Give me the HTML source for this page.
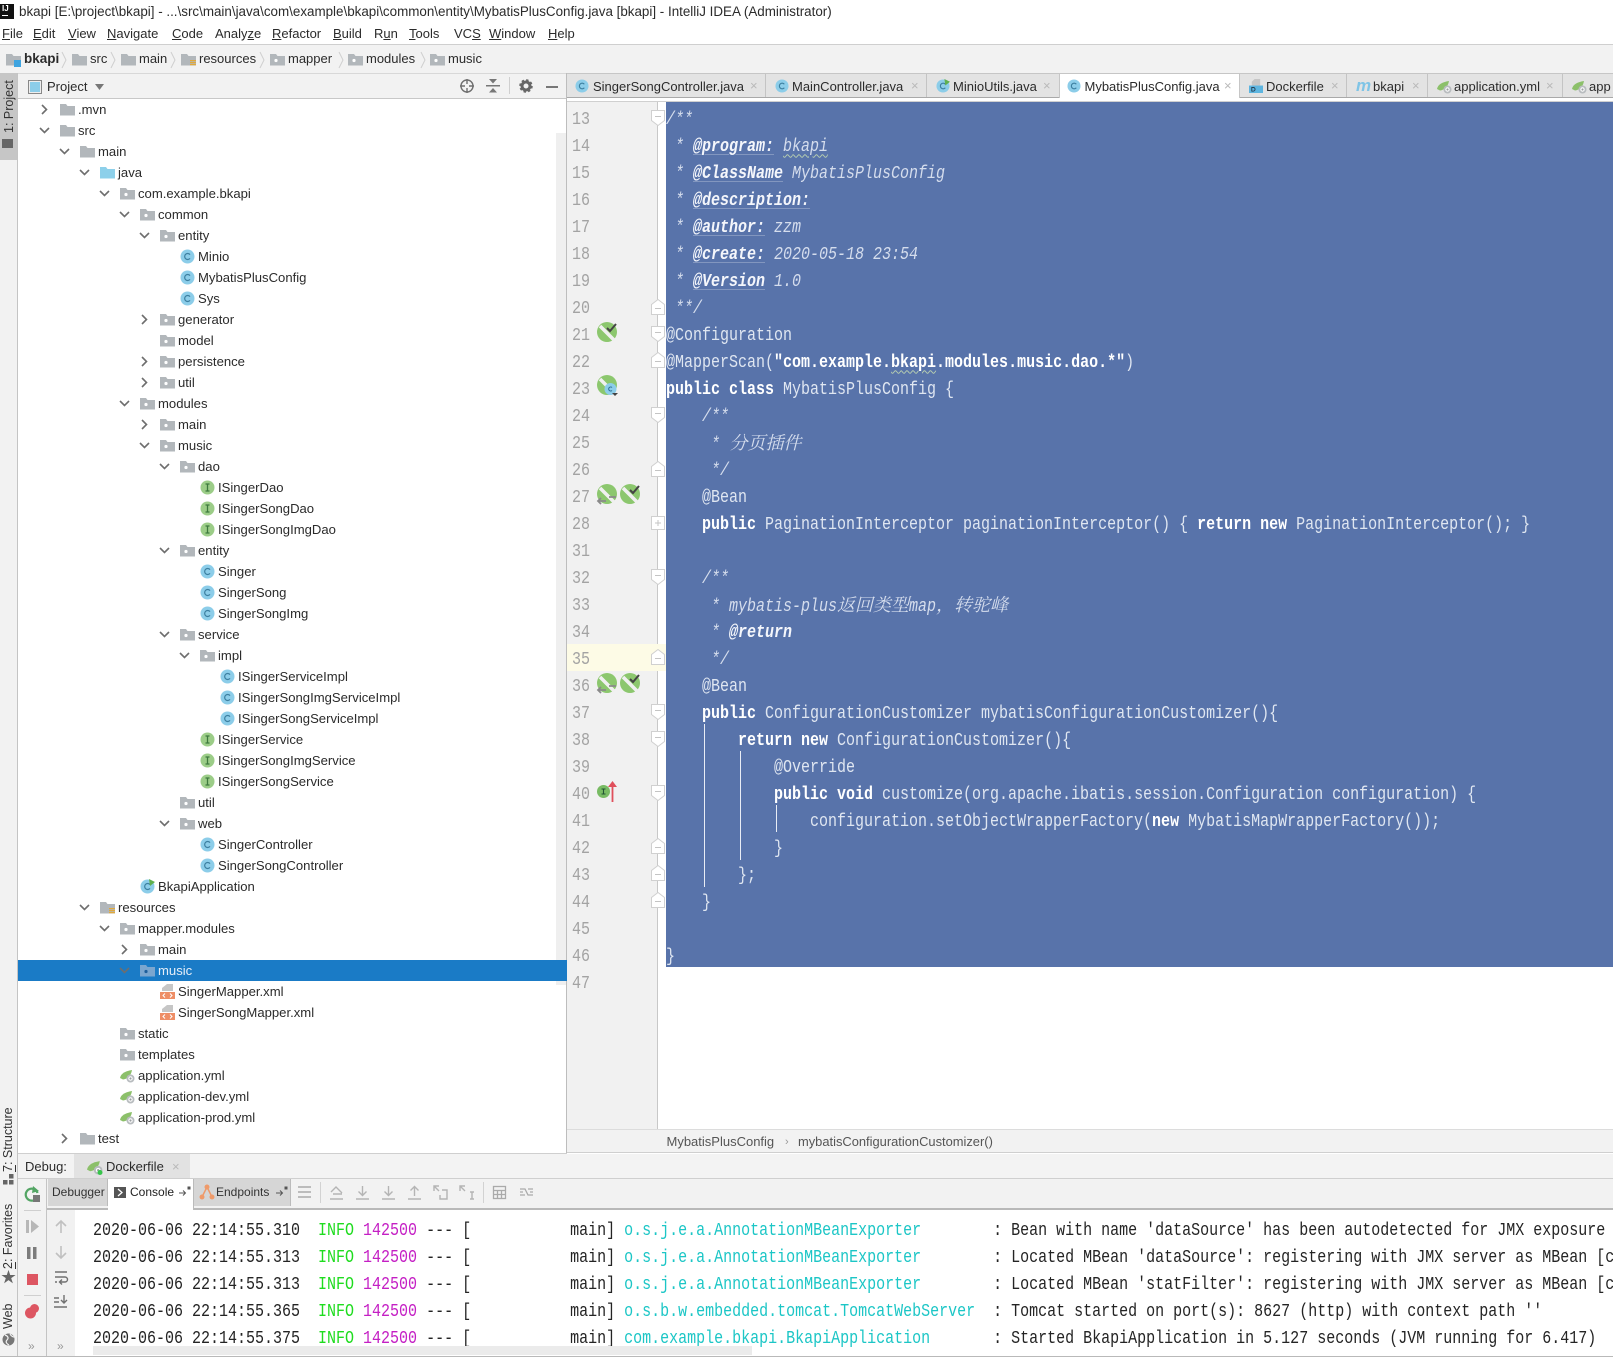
<!DOCTYPE html>
<html lang="en"><head><meta charset="utf-8"><title>bkapi - IntelliJ IDEA</title>
<style>
html{margin:0;padding:0;background:#fff;overflow:hidden;width:1613px;height:1357px}
body{margin:0;padding:0;background:#fff;position:relative;width:1613px;height:1357px;overflow:hidden;font-family:"Liberation Sans","Noto Sans CJK SC",sans-serif;font-size:13px;color:#2b2b2b}
.a{position:absolute}
.t{position:absolute;white-space:pre;line-height:18px}
.bar{position:absolute}
svg{position:absolute;overflow:visible}
/* tree */
#tree{position:absolute;left:18px;top:99px;width:549px}
.r{position:relative;height:21px;line-height:21px;font-size:13.1px;white-space:pre;color:#2b2b2b;padding-left:var(--l)}
.d0{--l:60px}.d1{--l:80px}.d2{--l:100px}.d3{--l:120px}.d4{--l:140px}.d5{--l:160px}.d6{--l:180px}.d7{--l:200px}.d8{--l:220px}
.r svg.i{left:calc(var(--l) - 18px);top:3px;width:15px;height:15px}
.r svg.c{left:calc(var(--l) - 39px);top:5px;width:11px;height:11px}
.sel{background:#1a7bc6;color:#e6eef8}
/* code */
.mono{font-family:"Liberation Mono","Noto Serif CJK SC",monospace;font-size:18px}
#code,#nums,#cons{position:absolute;transform:scaleX(.8333);transform-origin:0 0}
.l{height:27px;line-height:27px;white-space:pre}
.up{position:relative;top:-2px}
#code{left:666px;top:106.5px;width:1300px;color:#dfe6f1}
#nums{left:572px;top:106.5px;color:#a3a3a3}
#cons{left:93px;top:1217.5px;color:#242424;width:1900px}
.k{font-weight:bold;color:#fff}
.cm{font-style:italic;color:#d5dded}
.tg{font-style:italic;font-weight:bold;color:#f4f6fb;text-decoration:underline;text-decoration-color:rgba(255,255,255,.25);text-decoration-thickness:1px;text-underline-offset:3px}
.w{text-decoration:underline wavy #b9d0b0 1px;text-underline-offset:3px}
.st{font-weight:bold;color:#fff}
.cj{display:inline-block;transform:scaleX(1.2);transform-origin:0 50%;font-family:"Noto Serif CJK SC",serif;font-style:italic;font-weight:400;color:#d5dded}
.g{color:#1fdc1f}.m{color:#c41fc4}.b{color:#1cc6c6}
.v{position:absolute;writing-mode:vertical-rl;transform:rotate(180deg);white-space:pre;font-size:12.5px;color:#333;line-height:14px}
.x{position:absolute;color:#b9b9b9;font-size:13px;line-height:18px}
.n{position:absolute;color:#b5b5b5;font-size:16px;line-height:16px}
</style></head>
<body>
<svg width="0" height="0" style="position:absolute">
<defs>
<symbol id="f" viewBox="0 0 15 15"><path d="M0 2h6l1.5 2H15v9.5H0z" fill="#b2b7bb"/></symbol>
<symbol id="p" viewBox="0 0 15 15"><path d="M0 2h6l1.5 2H15v9.5H0z" fill="#b2b7bb"/><circle cx="6" cy="8.5" r="1.6" fill="#fff"/></symbol>
<symbol id="ps" viewBox="0 0 15 15"><path d="M0 2h6l1.5 2H15v9.5H0z" fill="#7ba6cf"/><circle cx="6" cy="8.5" r="1.6" fill="#1f5f9c"/></symbol>
<symbol id="fb" viewBox="0 0 15 15"><path d="M0 2h6l1.5 2H15v9.5H0z" fill="#8dd0ea"/></symbol>
<symbol id="fr" viewBox="0 0 15 15"><path d="M0 2h6l1.5 2H15v9.5H0z" fill="#b2b7bb"/><path d="M9 8h6v1.2H9zM9 10h6v1.2H9zM9 12h6v1.2H9z" fill="#e0a93c"/></symbol>
<symbol id="C" viewBox="0 0 15 15"><circle cx="7.5" cy="7.5" r="7" fill="#8ccde9"/><path d="M10 5.6A3 3 0 1 0 10 9.4" fill="none" stroke="#3c7fa0" stroke-width="1.2"/></symbol>
<symbol id="CR" viewBox="0 0 15 15"><circle cx="7.5" cy="7.5" r="7" fill="#8ccde9"/><path d="M10 5.6A3 3 0 1 0 10 9.4" fill="none" stroke="#3c7fa0" stroke-width="1.2"/><path d="M9 0l6 3-5 4z" fill="#5fb04f"/></symbol>
<symbol id="I" viewBox="0 0 15 15"><circle cx="7.5" cy="7.5" r="7" fill="#9ccd88"/><path d="M5.5 4h4M5.5 11h4M7.5 4v7" fill="none" stroke="#3e7a3e" stroke-width="1.3"/></symbol>
<symbol id="Y" viewBox="0 0 15 15"><path d="M0 10C1 5 6 3 12 2 11 8 7 11 3 11.5z" fill="#8cc06a"/><circle cx="10.5" cy="10.5" r="4" fill="#b8bcbf"/><circle cx="10.5" cy="10.5" r="2.2" fill="#fff"/><circle cx="10.5" cy="10.5" r="1.1" fill="#9a9ea2"/></symbol>
<symbol id="X" viewBox="0 0 15 15"><path d="M7 0h6v7H2V4z" fill="#c6c6c6"/><rect x="0" y="8" width="15" height="7" fill="#ee8e66"/><path d="M5 9.5L3 11.5l2 2M10 9.5l2 2-2 2" fill="none" stroke="#fff" stroke-width="1"/></symbol>
<symbol id="D" viewBox="0 0 15 15"><path d="M6 0h6v7H3V3z" fill="#c6c6c6"/><rect y="7" width="15" height="8" fill="#5db5e0"/><path d="M3 9h1.5a2 2 0 0 1 0 4H3z" fill="none" stroke="#234" stroke-width=".9"/></symbol>
<symbol id="ad" viewBox="0 0 11 11"><path d="M1 3l4.5 4.5L10 3" fill="none" stroke="#6e6e6e" stroke-width="1.6"/></symbol>
<symbol id="ar" viewBox="0 0 11 11"><path d="M3 1l4.5 4.5L3 10" fill="none" stroke="#6e6e6e" stroke-width="1.6"/></symbol>
<symbol id="fo" viewBox="0 0 14 16"><path d="M.5.5h13v10L7 15.5.5 10.500z" fill="#fff" stroke="#d0d0d0"/><path d="M4 6.500h6" stroke="#c4c4c4"/></symbol>
<symbol id="fu" viewBox="0 0 14 16"><path d="M.5 15.500h13v-10L7 .5.500 5.500z" fill="#fff" stroke="#d0d0d0"/><path d="M4 9.500h6" stroke="#c4c4c4"/></symbol>
<symbol id="fp" viewBox="0 0 14 14"><rect x=".5" y=".5" width="13" height="13" fill="#fff" stroke="#d0d0d0"/><path d="M4 7h6M7 4v6" stroke="#c4c4c4"/></symbol>
<symbol id="sp" viewBox="0 0 20 20"><circle cx="10" cy="10" r="10" fill="#8cc76e"/><path d="M3 4L17 18" stroke="#f0f0f0" stroke-width="3.500"/></symbol>
</defs></svg>

<!-- title & menu -->
<div class="a" style="left:0;top:4px;width:14px;height:15px;background:#111"></div>
<div class="a" style="left:2px;top:4px;font:bold 8px/9px 'Liberation Sans';color:#fff">IJ</div>
<div class="a" style="left:2px;top:15px;width:6px;height:1px;background:#fff"></div>
<div class="t" style="left:19px;top:3px;font-size:13.4px">bkapi [E:\project\bkapi] - ...\src\main\java\com\example\bkapi\common\entity\MybatisPlusConfig.java [bkapi] - IntelliJ IDEA (Administrator)</div>
<div class="t" style="left:2px;top:25px"><u>F</u>ile</div><div class="t" style="left:33px;top:25px"><u>E</u>dit</div><div class="t" style="left:68px;top:25px"><u>V</u>iew</div><div class="t" style="left:107px;top:25px"><u>N</u>avigate</div><div class="t" style="left:172px;top:25px"><u>C</u>ode</div><div class="t" style="left:215px;top:25px">Analy<u>z</u>e</div><div class="t" style="left:272px;top:25px"><u>R</u>efactor</div><div class="t" style="left:333px;top:25px"><u>B</u>uild</div><div class="t" style="left:374px;top:25px">R<u>u</u>n</div><div class="t" style="left:409px;top:25px"><u>T</u>ools</div><div class="t" style="left:454px;top:25px">VC<u>S</u></div><div class="t" style="left:489px;top:25px"><u>W</u>indow</div><div class="t" style="left:548px;top:25px"><u>H</u>elp</div>
<div class="bar" style="left:0;top:44px;width:1613px;height:29px;background:#f2f2f2;border-top:1px solid #cfcfcf;box-sizing:border-box"></div>
<!-- nav breadcrumb -->
<svg style="left:6px;top:52px" width="15" height="15"><use href="#f"/><rect x="8" y="8" width="7" height="7" fill="#3fa4e0"/></svg>
<div class="t" style="left:24px;top:50px;font-weight:bold;font-size:13.500px">bkapi</div>
<div class="t" style="left:90px;top:50px">src</div><div class="t" style="left:139px;top:50px">main</div><div class="t" style="left:199px;top:50px">resources</div><div class="t" style="left:288px;top:50px">mapper</div><div class="t" style="left:366px;top:50px">modules</div><div class="t" style="left:448px;top:50px">music</div>
<svg style="left:72px;top:52px" width="15" height="15"><use href="#f"/></svg><svg style="left:121px;top:52px" width="15" height="15"><use href="#f"/></svg><svg style="left:181px;top:52px" width="15" height="15"><use href="#fr"/></svg><svg style="left:270px;top:52px" width="15" height="15"><use href="#p"/></svg><svg style="left:348px;top:52px" width="15" height="15"><use href="#p"/></svg><svg style="left:430px;top:52px" width="15" height="15"><use href="#p"/></svg>
<svg style="left:0;top:50px" width="500" height="20" fill="none" stroke="#cfcfcf"><path d="M62 2l4 8-4 8M111 2l4 8-4 8M171 2l4 8-4 8M260 2l4 8-4 8M339 2l4 8-4 8M421 2l4 8-4 8"/></svg>

<!-- left strip -->
<div class="bar" style="left:0;top:73px;width:18px;height:1080px;background:#f2f2f2;border-right:1px solid #c4c4c4;box-sizing:border-box"></div>
<div class="bar" style="left:0;top:73px;width:17px;height:87px;background:#c6c6c6"></div>
<div class="v" style="left:2px;top:84px;height:49px">1: Project</div>
<div class="a" style="left:2px;top:139px;width:11px;height:9px;background:#666"></div>

<!-- project header -->
<div class="bar" style="left:18px;top:73px;width:549px;height:26px;background:#f2f2f2;border-bottom:1px solid #c8c8c8;border-top:1px solid #d8d8d8;box-sizing:border-box"></div>
<div class="a" style="left:28px;top:80px;width:12px;height:12px;border:1px solid #888;background:#8ccde9;box-shadow:inset 0 0 0 1px #eee"></div>
<div class="t" style="left:47px;top:78px;font-size:13px">Project</div>
<svg style="left:95px;top:84px" width="10" height="6"><path d="M0 0h9L4.500 6z" fill="#777"/></svg>
<svg style="left:459px;top:78px" width="16" height="16" fill="none" stroke="#6f6f6f" stroke-width="1.400"><circle cx="8" cy="8" r="6"/><path d="M8 1v5M8 10v5M1 8h5M10 8h5"/></svg>
<svg style="left:486px;top:79px" width="14" height="14" fill="#777"><path d="M0 6h14v1.500H0z"/><path d="M3 0h8L7 4.500zM3 13.500h8L7 9z"/></svg>
<div class="a" style="left:509px;top:77px;width:1px;height:17px;background:#cfcfcf"></div>
<svg style="left:520px;top:80px" width="12" height="12"><circle cx="6" cy="6" r="4" fill="none" stroke="#666" stroke-width="3"/><circle cx="6" cy="6" r="6" fill="none" stroke="#666" stroke-width="1.500" stroke-dasharray="2.500 2.200"/></svg>
<div class="a" style="left:546px;top:86px;width:12px;height:1.500px;background:#777"></div>

<!-- scroll track tree -->
<div class="bar" style="left:556px;top:133px;width:10px;height:852px;background:#efefef"></div>
<div class="bar" style="left:566px;top:73px;width:1px;height:1080px;background:#bdbdbd"></div>

<!-- tree -->
<div id="tree">
<div class="r d0"><svg class="c"><use href="#ar"/></svg><svg class="i"><use href="#f"/></svg>.mvn</div>
<div class="r d0"><svg class="c"><use href="#ad"/></svg><svg class="i"><use href="#f"/></svg>src</div>
<div class="r d1"><svg class="c"><use href="#ad"/></svg><svg class="i"><use href="#f"/></svg>main</div>
<div class="r d2"><svg class="c"><use href="#ad"/></svg><svg class="i"><use href="#fb"/></svg>java</div>
<div class="r d3"><svg class="c"><use href="#ad"/></svg><svg class="i"><use href="#p"/></svg>com.example.bkapi</div>
<div class="r d4"><svg class="c"><use href="#ad"/></svg><svg class="i"><use href="#p"/></svg>common</div>
<div class="r d5"><svg class="c"><use href="#ad"/></svg><svg class="i"><use href="#p"/></svg>entity</div>
<div class="r d6"><svg class="i"><use href="#C"/></svg>Minio</div>
<div class="r d6"><svg class="i"><use href="#C"/></svg>MybatisPlusConfig</div>
<div class="r d6"><svg class="i"><use href="#C"/></svg>Sys</div>
<div class="r d5"><svg class="c"><use href="#ar"/></svg><svg class="i"><use href="#p"/></svg>generator</div>
<div class="r d5"><svg class="i"><use href="#p"/></svg>model</div>
<div class="r d5"><svg class="c"><use href="#ar"/></svg><svg class="i"><use href="#p"/></svg>persistence</div>
<div class="r d5"><svg class="c"><use href="#ar"/></svg><svg class="i"><use href="#p"/></svg>util</div>
<div class="r d4"><svg class="c"><use href="#ad"/></svg><svg class="i"><use href="#p"/></svg>modules</div>
<div class="r d5"><svg class="c"><use href="#ar"/></svg><svg class="i"><use href="#p"/></svg>main</div>
<div class="r d5"><svg class="c"><use href="#ad"/></svg><svg class="i"><use href="#p"/></svg>music</div>
<div class="r d6"><svg class="c"><use href="#ad"/></svg><svg class="i"><use href="#p"/></svg>dao</div>
<div class="r d7"><svg class="i"><use href="#I"/></svg>ISingerDao</div>
<div class="r d7"><svg class="i"><use href="#I"/></svg>ISingerSongDao</div>
<div class="r d7"><svg class="i"><use href="#I"/></svg>ISingerSongImgDao</div>
<div class="r d6"><svg class="c"><use href="#ad"/></svg><svg class="i"><use href="#p"/></svg>entity</div>
<div class="r d7"><svg class="i"><use href="#C"/></svg>Singer</div>
<div class="r d7"><svg class="i"><use href="#C"/></svg>SingerSong</div>
<div class="r d7"><svg class="i"><use href="#C"/></svg>SingerSongImg</div>
<div class="r d6"><svg class="c"><use href="#ad"/></svg><svg class="i"><use href="#p"/></svg>service</div>
<div class="r d7"><svg class="c"><use href="#ad"/></svg><svg class="i"><use href="#p"/></svg>impl</div>
<div class="r d8"><svg class="i"><use href="#C"/></svg>ISingerServiceImpl</div>
<div class="r d8"><svg class="i"><use href="#C"/></svg>ISingerSongImgServiceImpl</div>
<div class="r d8"><svg class="i"><use href="#C"/></svg>ISingerSongServiceImpl</div>
<div class="r d7"><svg class="i"><use href="#I"/></svg>ISingerService</div>
<div class="r d7"><svg class="i"><use href="#I"/></svg>ISingerSongImgService</div>
<div class="r d7"><svg class="i"><use href="#I"/></svg>ISingerSongService</div>
<div class="r d6"><svg class="i"><use href="#p"/></svg>util</div>
<div class="r d6"><svg class="c"><use href="#ad"/></svg><svg class="i"><use href="#p"/></svg>web</div>
<div class="r d7"><svg class="i"><use href="#C"/></svg>SingerController</div>
<div class="r d7"><svg class="i"><use href="#C"/></svg>SingerSongController</div>
<div class="r d4"><svg class="i"><use href="#CR"/></svg>BkapiApplication</div>
<div class="r d2"><svg class="c"><use href="#ad"/></svg><svg class="i"><use href="#fr"/></svg>resources</div>
<div class="r d3"><svg class="c"><use href="#ad"/></svg><svg class="i"><use href="#p"/></svg>mapper.modules</div>
<div class="r d4"><svg class="c"><use href="#ar"/></svg><svg class="i"><use href="#p"/></svg>main</div>
<div class="r d4 sel"><svg class="c"><use href="#ad"/></svg><svg class="i"><use href="#ps"/></svg>music</div>
<div class="r d5"><svg class="i"><use href="#X"/></svg>SingerMapper.xml</div>
<div class="r d5"><svg class="i"><use href="#X"/></svg>SingerSongMapper.xml</div>
<div class="r d3"><svg class="i"><use href="#p"/></svg>static</div>
<div class="r d3"><svg class="i"><use href="#p"/></svg>templates</div>
<div class="r d3"><svg class="i"><use href="#Y"/></svg>application.yml</div>
<div class="r d3"><svg class="i"><use href="#Y"/></svg>application-dev.yml</div>
<div class="r d3"><svg class="i"><use href="#Y"/></svg>application-prod.yml</div>
<div class="r d1"><svg class="c"><use href="#ar"/></svg><svg class="i"><use href="#f"/></svg>test</div>
</div>

<!-- tab bar -->
<div class="bar" style="left:567px;top:73px;width:1046px;height:25px;background:#e3e3e3;border-top:1px solid #c6c6c6;border-bottom:1px solid #a9a9a9;box-sizing:border-box"></div>
<div class="bar" style="left:1059px;top:73px;width:181px;height:28px;background:#fff;border-top:1px solid #c6c6c6;border-left:1px solid #c6c6c6;border-right:1px solid #c6c6c6;box-sizing:border-box"></div>
<div class="bar" style="left:765px;top:74px;width:1px;height:23px;background:#c4c4c4"></div><div class="bar" style="left:926px;top:74px;width:1px;height:23px;background:#c4c4c4"></div><div class="bar" style="left:1346px;top:74px;width:1px;height:23px;background:#c4c4c4"></div><div class="bar" style="left:1427px;top:74px;width:1px;height:23px;background:#c4c4c4"></div><div class="bar" style="left:1562px;top:74px;width:1px;height:23px;background:#c4c4c4"></div>
<svg style="left:575px;top:79px" width="14" height="14"><use href="#C"/></svg><div class="t" style="left:593px;top:78px">SingerSongController.java</div><div class="x" style="left:750px;top:77px">×</div>
<svg style="left:775px;top:79px" width="14" height="14"><use href="#C"/></svg><div class="t" style="left:792px;top:78px">MainController.java</div><div class="x" style="left:911px;top:77px">×</div>
<svg style="left:936px;top:79px" width="14" height="14"><use href="#CR"/></svg><div class="t" style="left:953px;top:78px">MinioUtils.java</div><div class="x" style="left:1043px;top:77px">×</div>
<svg style="left:1067px;top:79px" width="14" height="14"><use href="#C"/></svg><div class="t" style="left:1084.500px;top:78px">MybatisPlusConfig.java</div><div class="x" style="left:1224px;top:77px">×</div>
<svg style="left:1249px;top:79px" width="14" height="14"><use href="#D"/></svg><div class="t" style="left:1266px;top:78px">Dockerfile</div><div class="x" style="left:1331px;top:77px">×</div>
<div class="t" style="left:1356px;top:77px;font-style:italic;font-weight:bold;font-size:17px;color:#7fc4e6;letter-spacing:-1px">m</div><div class="t" style="left:1373px;top:78px">bkapi</div><div class="x" style="left:1412px;top:77px">×</div>
<svg style="left:1437px;top:79px" width="15" height="15"><use href="#Y"/></svg><div class="t" style="left:1454px;top:78px">application.yml</div><div class="x" style="left:1546px;top:77px">×</div>
<svg style="left:1572px;top:79px" width="15" height="15"><use href="#Y"/></svg><div class="t" style="left:1589px;top:78px">app</div>
<div class="bar" style="left:567px;top:98px;width:1046px;height:3px;background:#fff"></div>
<div class="bar" style="left:567px;top:101px;width:1046px;height:1px;background:#d0d0d0"></div>

<!-- gutter / editor -->
<div class="bar" style="left:567px;top:102px;width:90px;height:1027px;background:#f1f1f1"></div>
<div class="bar" style="left:657px;top:102px;width:1px;height:1027px;background:#c8c8c8"></div>
<div class="bar" style="left:567px;top:644px;width:99px;height:27px;background:#fdfbe6"></div>
<div class="bar" style="left:666px;top:102px;width:947px;height:865px;background:#5873aa"></div>
<div class="bar" style="left:704px;top:724px;width:1px;height:163px;background:#e9edf5"></div>
<div class="bar" style="left:740px;top:751px;width:1px;height:109px;background:#e9edf5"></div>
<div class="bar" style="left:776px;top:805px;width:1px;height:27px;background:#e9edf5"></div>

<div id="nums" class="mono"><div class="l">13</div><div class="l">14</div><div class="l">15</div><div class="l">16</div><div class="l">17</div><div class="l">18</div><div class="l">19</div><div class="l">20</div><div class="l">21</div><div class="l">22</div><div class="l">23</div><div class="l">24</div><div class="l">25</div><div class="l">26</div><div class="l">27</div><div class="l">28</div><div class="l">31</div><div class="l">32</div><div class="l">33</div><div class="l">34</div><div class="l">35</div><div class="l">36</div><div class="l">37</div><div class="l">38</div><div class="l">39</div><div class="l">40</div><div class="l">41</div><div class="l">42</div><div class="l">43</div><div class="l">44</div><div class="l">45</div><div class="l">46</div><div class="l">47</div></div>

<!-- fold markers -->
<svg style="left:651px;top:110px" width="14" height="16"><use href="#fo"/></svg>
<svg style="left:651px;top:299px" width="14" height="16"><use href="#fu"/></svg>
<svg style="left:651px;top:326px" width="14" height="16"><use href="#fo"/></svg>
<svg style="left:651px;top:352px" width="14" height="16"><use href="#fu"/></svg>
<svg style="left:651px;top:407px" width="14" height="16"><use href="#fo"/></svg>
<svg style="left:651px;top:461px" width="14" height="16"><use href="#fu"/></svg>
<svg style="left:651px;top:516px" width="14" height="14"><use href="#fp"/></svg>
<svg style="left:651px;top:569px" width="14" height="16"><use href="#fo"/></svg>
<svg style="left:651px;top:649px" width="14" height="16"><use href="#fu"/></svg>
<svg style="left:651px;top:704px" width="14" height="16"><use href="#fo"/></svg>
<svg style="left:651px;top:731px" width="14" height="16"><use href="#fo"/></svg>
<svg style="left:651px;top:785px" width="14" height="16"><use href="#fo"/></svg>
<svg style="left:651px;top:838px" width="14" height="16"><use href="#fu"/></svg>
<svg style="left:651px;top:865px" width="14" height="16"><use href="#fu"/></svg>
<svg style="left:651px;top:892px" width="14" height="16"><use href="#fu"/></svg>

<!-- gutter icons -->
<svg style="left:597px;top:322px" width="20" height="20"><use href="#sp"/><path d="M10 6l3 3 6-7" fill="none" stroke="#444" stroke-width="2"/></svg>
<svg style="left:597px;top:375px" width="20" height="20"><use href="#sp"/><circle cx="13.500" cy="14" r="6" fill="#8ccde9"/><path d="M15 12.500a2 2 0 1 0 0 3" fill="none" stroke="#2b6f92"/><path d="M15 18h6l-3 3z" fill="#444"/></svg>
<svg style="left:597px;top:484px" width="20" height="20"><use href="#sp"/><path d="M1 17h8M4 14l-3 3 3 3M19 13h-7" fill="none" stroke="#8a8a8a" stroke-width="1.800"/></svg>
<svg style="left:620px;top:484px" width="20" height="20"><use href="#sp"/><path d="M10 6l3 3 6-7" fill="none" stroke="#444" stroke-width="2"/></svg>
<svg style="left:597px;top:673px" width="20" height="20"><use href="#sp"/><path d="M1 17h8M4 14l-3 3 3 3M19 13h-7" fill="none" stroke="#8a8a8a" stroke-width="1.800"/></svg>
<svg style="left:620px;top:673px" width="20" height="20"><use href="#sp"/><path d="M10 6l3 3 6-7" fill="none" stroke="#444" stroke-width="2"/></svg>
<svg style="left:597px;top:785px" width="13" height="13"><circle cx="6.500" cy="6.500" r="6.500" fill="#78bb63"/><path d="M4.500 4h4M4.500 9h4M6.500 4v5" stroke="#253" stroke-width="1.100" fill="none"/></svg>
<svg style="left:608px;top:781px" width="9" height="21"><path d="M4.500 21V3" stroke="#e0505c" stroke-width="1.800"/><path d="M0 6l4.500-6L9 6z" fill="#e0505c"/></svg>

<!-- code -->
<div id="code" class="mono"><div class="l cm">/**</div><div class="l cm"> * <span class="tg">@program:</span> <span class="w">bkapi</span></div><div class="l cm"> * <span class="tg">@ClassName</span> MybatisPlusConfig</div><div class="l cm"> * <span class="tg">@description:</span></div><div class="l cm"> * <span class="tg">@author:</span> zzm</div><div class="l cm"> * <span class="tg">@create:</span> 2020-05-18 23:54</div><div class="l cm"> * <span class="tg">@Version</span> 1.0</div><div class="l cm"> **/</div><div class="l">@Configuration</div><div class="l">@MapperScan(<span class="st">"com.example.<span class="w">bkapi</span>.modules.music.dao.*"</span>)</div><div class="l"><span class="k">public class</span> MybatisPlusConfig {</div><div class="l cm">    /**</div><div class="l cm up">     * <span class="cj" style="width:86.400px">分页插件</span></div><div class="l cm">     */</div><div class="l">    @Bean</div><div class="l">    <span class="k">public</span> PaginationInterceptor paginationInterceptor() { <span class="k">return new</span> PaginationInterceptor(); }</div><div class="l"> </div><div class="l cm">    /**</div><div class="l cm up">     * mybatis-plus<span class="cj" style="width:86.400px">返回类型</span>map<span class="cj" style="width:86.400px">，转驼峰</span></div><div class="l cm">     * <span class="tg" style="text-decoration:none">@return</span></div><div class="l cm">     */</div><div class="l">    @Bean</div><div class="l">    <span class="k">public</span> ConfigurationCustomizer mybatisConfigurationCustomizer(){</div><div class="l">        <span class="k">return new</span> ConfigurationCustomizer(){</div><div class="l">            @Override</div><div class="l">            <span class="k">public void</span> customize(org.apache.ibatis.session.Configuration configuration) {</div><div class="l">                configuration.setObjectWrapperFactory(<span class="k">new</span> MybatisMapWrapperFactory());</div><div class="l">            }</div><div class="l">        };</div><div class="l">    }</div><div class="l"> </div><div class="l">}</div></div>

<!-- breadcrumb -->
<div class="bar" style="left:567px;top:1129px;width:1046px;height:24px;background:#f2f2f2;border-top:1px solid #dcdcdc;border-bottom:1px solid #cfcfcf;box-sizing:border-box"></div>
<div class="t" style="left:666.500px;top:1133px;color:#555">MybatisPlusConfig</div>
<div class="t" style="left:785px;top:1133px;color:#999;font-size:11px">›</div>
<div class="t" style="left:798px;top:1133px;color:#555;font-size:12.900px">mybatisConfigurationCustomizer()</div>

<!-- bottom -->
<div class="bar" style="left:18px;top:1153px;width:549px;height:1px;background:#cfcfcf"></div>
<div class="bar" style="left:0;top:1153px;width:18px;height:204px;background:#f2f2f2;border-right:1px solid #c4c4c4;box-sizing:border-box"></div>
<div class="bar" style="left:18px;top:1154px;width:1595px;height:25px;background:#f3f3f3;border-bottom:1px solid #cfcfcf;box-sizing:border-box"></div>
<div class="t" style="left:25px;top:1158px">Debug:</div>
<div class="bar" style="left:74px;top:1154px;width:116px;height:24px;background:#e2e2e2"></div>
<svg style="left:87px;top:1159px" width="16" height="16"><use href="#Y"/><circle cx="13" cy="13.500" r="2.500" fill="#36c44a"/></svg>
<div class="t" style="left:106px;top:1158px">Dockerfile</div><div class="x" style="left:172px;top:1158px">×</div>

<div class="bar" style="left:18px;top:1179px;width:1595px;height:30px;background:#f2f2f2"></div>
<div class="bar" style="left:18px;top:1179px;width:29px;height:178px;background:#f2f2f2;border-right:1px solid #c4c4c4;box-sizing:border-box"></div>
<div class="bar" style="left:47px;top:1209px;width:28px;height:148px;background:#f1f1f1"></div>
<div class="bar" style="left:47px;top:1208px;width:1566px;height:2px;background:#b9b9b9"></div>
<div class="bar" style="left:24px;top:1210px;width:17px;height:1px;background:#cfcfcf"></div>
<div class="bar" style="left:24px;top:1295px;width:17px;height:1px;background:#cfcfcf"></div>
<div class="bar" style="left:48px;top:1179px;width:60px;height:27px;background:#d6d6d6;border-right:1px solid #bbb;box-sizing:border-box"></div>
<div class="bar" style="left:108px;top:1179px;width:86px;height:31px;background:#fff;border-right:1px solid #bbb;box-sizing:border-box"></div>
<div class="bar" style="left:194px;top:1179px;width:97px;height:27px;background:#d6d6d6;border-right:1px solid #bbb;box-sizing:border-box"></div>
<div class="t" style="left:52px;top:1183px;font-size:12px;color:#333">Debugger</div>
<div class="a" style="left:114px;top:1187px;width:12px;height:11px;background:#555"></div><svg style="left:116px;top:1188px" width="8" height="9"><path d="M2 1l4 3.500L2 8" stroke="#fff" fill="none" stroke-width="1.300"/></svg>
<div class="t" style="left:130px;top:1183px;font-size:12px;color:#222">Console</div>
<svg style="left:179px;top:1187px" width="12" height="10" fill="none" stroke="#555"><path d="M0 6h6M4 3.500L6.500 6 4 8.500"/><rect x="9" y="0" width="2" height="2" fill="#555"/></svg>
<svg style="left:199px;top:1184px" width="15" height="16" fill="#ef9a6a"><circle cx="8" cy="3" r="2.500"/><circle cx="3" cy="13" r="2.500"/><circle cx="13" cy="13" r="2.500"/><path d="M8 3L3 13M8 3l5 10" stroke="#ef9a6a" stroke-width="1.500"/></svg>
<div class="t" style="left:216px;top:1183px;font-size:12px;color:#333">Endpoints</div>
<svg style="left:276px;top:1187px" width="12" height="10" fill="none" stroke="#555"><path d="M0 6h6M4 3.500L6.500 6 4 8.500"/><rect x="9" y="0" width="2" height="2" fill="#555"/></svg>
<svg style="left:298px;top:1185px" width="13" height="14" stroke="#aaa" stroke-width="1.600"><path d="M0 2h13M0 7h13M0 12h13"/></svg>
<div class="a" style="left:320px;top:1182px;width:1px;height:21px;background:#d2d2d2"></div>
<svg style="left:330px;top:1185px" width="210" height="15" fill="none" stroke="#b4b4b4" stroke-width="1.400">
<path d="M0 14h13M1 7l5-5 6 6M3 9h9"/>
<path d="M26 14h13M32.500 1v9M28.500 6.500l4 4 4-4"/>
<path d="M52 14h13M58.500 1v9M54.500 6.500l4 4 4-4"/>
<path d="M78 14h13M84.500 11V2M80.500 5.500l4-4 4 4"/>
<path d="M104 1l5 5M104 6V1h5M112 5h5v9h-7v-4"/>
<path d="M130 1l5 5M130 6V1h5M140 7h4M142 7v7M140 14h4"/>
</svg>
<div class="a" style="left:483px;top:1182px;width:1px;height:21px;background:#d2d2d2"></div>
<svg style="left:493px;top:1186px" width="14" height="13" fill="none" stroke="#aaa" stroke-width="1.300"><rect x=".5" y=".5" width="12" height="12"/><path d="M.5 4.500h12M.5 8.500h12M4.500 4.500v8M8.500 4.500v8"/></svg>
<svg style="left:520px;top:1186px" width="13" height="13" fill="none" stroke="#aaa" stroke-width="1.300"><path d="M0 3h5l3 6h5M0 9h5M8 3h5M0 6h3M10 6h3"/></svg>

<!-- debug left icons -->
<svg style="left:24px;top:1186px" width="17" height="17"><path d="M13.500 7A6 6 0 1 0 9 14.500" fill="none" stroke="#53a564" stroke-width="2.200"/><path d="M9 0l6 5-7 2z" fill="#53a564"/><rect x="9" y="9" width="7" height="7" fill="#777"/></svg>
<svg style="left:26px;top:1220px" width="13" height="13" fill="#b7b7b7"><rect width="3" height="13"/><path d="M5 0l8 6.500L5 13z"/></svg>
<svg style="left:27px;top:1247px" width="10" height="12" fill="#7c7c7c"><rect width="3.500" height="12"/><rect x="6" width="3.500" height="12"/></svg>
<div class="a" style="left:27px;top:1274px;width:11px;height:11px;background:#dd5662"></div>
<svg style="left:25px;top:1304px" width="14" height="15" fill="#dd5662"><circle cx="5.500" cy="9" r="5.500"/><circle cx="9.500" cy="4.500" r="4.500"/></svg>
<div class="n" style="left:28px;top:1338px;font-size:12px;color:#999">»</div>
<svg style="left:55px;top:1220px" width="12" height="13" fill="none" stroke="#c0c0c0" stroke-width="1.600"><path d="M6 13V1M1 6l5-5 5 5"/></svg>
<svg style="left:55px;top:1246px" width="12" height="13" fill="none" stroke="#c0c0c0" stroke-width="1.600"><path d="M6 0v12M1 7l5 5 5-5"/></svg>
<svg style="left:54px;top:1271px" width="14" height="15" fill="none" stroke="#707070" stroke-width="1.400"><path d="M1 1h12M1 6h10a2.500 2.500 0 0 1 0 5H6M8 8.500L5.500 11 8 13.500M1 11h2"/></svg>
<svg style="left:54px;top:1294px" width="14" height="15" fill="none" stroke="#707070" stroke-width="1.400"><path d="M0 4h5M0 8h5M0 13h13M10 1v8M7 6l3 3 3-3"/></svg>
<div class="n" style="left:57px;top:1338px;font-size:12px;color:#999">»</div>

<div class="v" style="left:1px;top:1108px;height:64px"><u>7</u>: Structure</div>
<svg style="left:3px;top:1174px" width="12" height="11" fill="#666"><rect x="6" y="0" width="4.500" height="4.500"/><rect y="6" width="4.500" height="4.500"/><rect x="6" y="6" width="4.500" height="4.500"/></svg>
<div class="v" style="left:1px;top:1209px;height:60px"><u>2</u>: Favorites</div>
<div class="a" style="left:0;top:1269px;width:17px;text-align:center;font-size:15px;line-height:17px;color:#666">★</div>
<div class="v" style="left:1px;top:1305px;height:24px">Web</div>
<svg style="left:2px;top:1333px" width="13" height="13"><circle cx="6.500" cy="6.500" r="6" fill="#777"/><path d="M3 2c3 1 4 3 2 5s0 4 2 5M8 1c1 2 3 3 4 3" fill="none" stroke="#f2f2f2" stroke-width="1.200"/></svg>

<!-- console -->
<div id="cons" class="mono"><div class="l">2020-06-06 22:14:55.310  <span class="g">INFO</span> <span class="m">142500</span> --- [           main] <span class="b">o.s.j.e.a.AnnotationMBeanExporter       </span> : Bean with name 'dataSource' has been autodetected for JMX exposure</div><div class="l">2020-06-06 22:14:55.313  <span class="g">INFO</span> <span class="m">142500</span> --- [           main] <span class="b">o.s.j.e.a.AnnotationMBeanExporter       </span> : Located MBean 'dataSource': registering with JMX server as MBean [c</div><div class="l">2020-06-06 22:14:55.313  <span class="g">INFO</span> <span class="m">142500</span> --- [           main] <span class="b">o.s.j.e.a.AnnotationMBeanExporter       </span> : Located MBean 'statFilter': registering with JMX server as MBean [c</div><div class="l">2020-06-06 22:14:55.365  <span class="g">INFO</span> <span class="m">142500</span> --- [           main] <span class="b">o.s.b.w.embedded.tomcat.TomcatWebServer </span> : Tomcat started on port(s): 8627 (http) with context path ''</div><div class="l">2020-06-06 22:14:55.375  <span class="g">INFO</span> <span class="m">142500</span> --- [           main] <span class="b">com.example.bkapi.BkapiApplication      </span> : Started BkapiApplication in 5.127 seconds (JVM running for 6.417)</div></div>
<div class="bar" style="left:93px;top:1346px;width:659px;height:9px;background:#ebebeb"></div>
<div class="bar" style="left:0;top:1356px;width:1613px;height:1px;background:#b9b9b9"></div>
</body></html>
